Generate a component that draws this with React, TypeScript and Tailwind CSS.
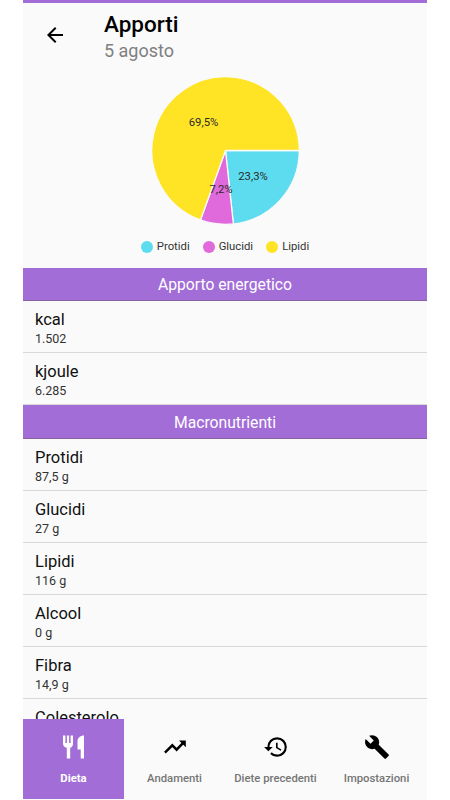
import type { ReactNode } from 'react';
import { MdArrowBack, MdBuild, MdHistory } from 'react-icons/md';

interface Nutrient {
    name: string;
    value: string;
}

interface Slice {
    name: string;
    percent: number;
    color: string;
    labelX: number;
    labelY: number;
}

const slices: Slice[] = [
    { name: 'Protidi', percent: 23.3, color: '#5cdcee', labelX: 102, labelY: 103.5 },
    { name: 'Glucidi', percent: 7.2, color: '#e069dc', labelX: 70, labelY: 116.5 },
    { name: 'Lipidi', percent: 69.5, color: '#ffe426', labelX: 52.5, labelY: 49.5 },
];

const energy: Nutrient[] = [
    { name: 'kcal', value: '1.502' },
    { name: 'kjoule', value: '6.285' },
];

const macros: Nutrient[] = [
    { name: 'Protidi', value: '87,5 g' },
    { name: 'Glucidi', value: '27 g' },
    { name: 'Lipidi', value: '116 g' },
    { name: 'Alcool', value: '0 g' },
    { name: 'Fibra', value: '14,9 g' },
];

const CENTER = 74.5;
const RADIUS = 73.8;

function slicePath(start: number, percent: number) {
    const from = (start / 100) * 2 * Math.PI;
    const to = ((start + percent) / 100) * 2 * Math.PI;
    const x1 = CENTER + RADIUS * Math.cos(from);
    const y1 = CENTER + RADIUS * Math.sin(from);
    const x2 = CENTER + RADIUS * Math.cos(to);
    const y2 = CENTER + RADIUS * Math.sin(to);
    return `M${CENTER} ${CENTER}L${x1} ${y1}A${RADIUS} ${RADIUS} 0 ${percent > 50 ? 1 : 0} 1 ${x2} ${y2}Z`;
}

function PieChart() {
    let start = 0;
    return (
        <svg width="149" height="149" viewBox="0 0 149 149" className="block">
            {slices.map((slice) => {
                const d = slicePath(start, slice.percent);
                start += slice.percent;
                return <path key={slice.name} d={d} fill={slice.color} stroke="#fafafa" strokeWidth="1.3" />;
            })}
            {slices.map((slice) => (
                <text key={slice.name} x={slice.labelX} y={slice.labelY} textAnchor="middle" className="text-[11.3px]" fill="#2a2a2a">
                    {slice.percent.toString().replace('.', ',')}%
                </text>
            ))}
        </svg>
    );
}

function RestaurantIcon() {
    return (
        <svg width="22" height="24" viewBox="0 0 22 24" fill="currentColor">
            <path d="M0 .5h2.400v7.500h1.500V.5h2.200v7.500h1.500V.5H10v8c0 2.400-.8 3.700-2.800 4.200V23.500H3.800V12.700C1.200 12.200 0 10.600 0 8.500Z" />
            <path d="M21 .5v23h-3.300v-9H14.500V6.500c0-3.500 2.500-6 6.500-6Z" />
        </svg>
    );
}

function TrendIcon() {
    return (
        <svg width="26" height="26" viewBox="0 0 24 24" fill="none">
            <path d="M2.700 17.300 9.500 10.500 13.500 14.500 20 7.800" stroke="currentColor" strokeWidth="2.300" />
            <path d="M15.700 6H22v6.300Z" fill="currentColor" />
        </svg>
    );
}

function SectionHeader({ title }: { title: string }) {
    return (
        <h2 className="flex h-full items-center justify-center border-b border-[#87619f] bg-[#a26dd7] pt-[2px] text-[15.7px] text-white">
            {title}
        </h2>
    );
}

function NutrientRow({ name, value }: Nutrient) {
    return (
        <li className="h-[52.1px] border-b border-[#d9d9d9] pt-[7px] pl-[12px]">
            <div className="text-[16.5px] leading-[23px] text-[#111]">{name}</div>
            <div className="text-[12.5px] leading-[16px] text-[#333]">{value}</div>
        </li>
    );
}

function NavItem({ label, icon, active = false }: { label: string; icon: ReactNode; active?: boolean }) {
    return (
        <button
            className={`flex flex-1 flex-col items-center pt-[14px] text-[11.3px] ${
                active ? 'bg-[#a26dd7] font-bold text-white' : 'font-medium text-[#757575]'
            }`}
        >
            <span className={`flex h-7 items-center ${active ? 'text-white' : 'text-black'}`}>{icon}</span>
            <span className="mt-[10px] leading-4 whitespace-nowrap">{label}</span>
        </button>
    );
}

export default function App() {
    return (
        <div className="h-[800px] overflow-hidden bg-white pl-[23px] font-['Roboto',sans-serif]">
            <div className="flex h-full w-[404px] flex-col bg-[#fafafa]">
                <div className="h-[3px] shrink-0 bg-[#a26dd7]" />

                {/* Header */}
                <header className="flex h-[73px] shrink-0 items-start">
                    <button className="mt-[20px] ml-[20px] text-black">
                        <MdArrowBack size={24} />
                    </button>
                    <div className="mt-[8px] ml-[37px]">
                        <h1 className="text-[22.5px] leading-[27px] font-medium text-black">Apporti</h1>
                        <p className="text-[18px] leading-[26px] text-[#808080]">5 agosto</p>
                    </div>
                </header>

                {/* Chart */}
                <section className="flex h-[192px] shrink-0 flex-col items-center">
                    <PieChart />
                    <ul className="mt-[14px] flex gap-[13px]">
                        {slices.map((slice) => (
                            <li key={slice.name} className="flex items-center gap-[4px] text-[11.3px] leading-4 text-[#333]">
                                <span className="size-[12px] rounded-full" style={{ backgroundColor: slice.color }} />
                                {slice.name}
                            </li>
                        ))}
                    </ul>
                </section>

                {/* Nutrients */}
                <main className="min-h-0 flex-1 overflow-hidden">
                    <div className="h-[33px]">
                        <SectionHeader title="Apporto energetico" />
                    </div>
                    <ul>
                        {energy.map((item) => (
                            <NutrientRow key={item.name} {...item} />
                        ))}
                    </ul>
                    <div className="h-[33.5px]">
                        <SectionHeader title="Macronutrienti" />
                    </div>
                    <ul>
                        {macros.map((item) => (
                            <NutrientRow key={item.name} {...item} />
                        ))}
                        <li className="pt-[7px] pl-[12px] text-[16.5px] leading-[23px] text-[#111]">Colesterolo</li>
                    </ul>
                </main>

                {/* Bottom navigation */}
                <nav className="mb-px flex h-20 shrink-0">
                    <NavItem label="Dieta" icon={<RestaurantIcon />} active />
                    <NavItem label="Andamenti" icon={<TrendIcon />} />
                    <NavItem label="Diete precedenti" icon={<MdHistory size={26} />} />
                    <NavItem label="Impostazioni" icon={<MdBuild size={26} />} />
                </nav>
            </div>
        </div>
    );
}
